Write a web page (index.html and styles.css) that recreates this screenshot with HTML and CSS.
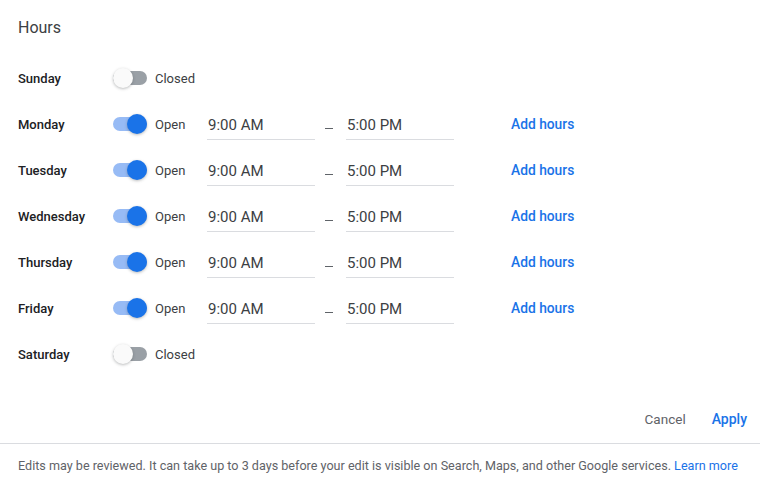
FILE: index.html
```html
<!DOCTYPE html>
<html>
<head>
<meta charset="utf-8">
<link rel="stylesheet" href="styles.css">
</head>
<body>
<div class="dialog">
  <div class="title">Hours</div>
  <div class="rows">
    <div class="row">
      <div class="day">Sunday</div>
      <div class="toggle off"><span class="track"></span><span class="thumb"></span></div>
      <div class="status">Closed</div>
    </div>
    <div class="row">
      <div class="day">Monday</div>
      <div class="toggle on"><span class="track"></span><span class="thumb"></span></div>
      <div class="status">Open</div>
      <div class="field">9:00 AM</div>
      <div class="dash"></div>
      <div class="field">5:00 PM</div>
      <div class="add">Add hours</div>
    </div>
    <div class="row">
      <div class="day">Tuesday</div>
      <div class="toggle on"><span class="track"></span><span class="thumb"></span></div>
      <div class="status">Open</div>
      <div class="field">9:00 AM</div>
      <div class="dash"></div>
      <div class="field">5:00 PM</div>
      <div class="add">Add hours</div>
    </div>
    <div class="row">
      <div class="day">Wednesday</div>
      <div class="toggle on"><span class="track"></span><span class="thumb"></span></div>
      <div class="status">Open</div>
      <div class="field">9:00 AM</div>
      <div class="dash"></div>
      <div class="field">5:00 PM</div>
      <div class="add">Add hours</div>
    </div>
    <div class="row">
      <div class="day">Thursday</div>
      <div class="toggle on"><span class="track"></span><span class="thumb"></span></div>
      <div class="status">Open</div>
      <div class="field">9:00 AM</div>
      <div class="dash"></div>
      <div class="field">5:00 PM</div>
      <div class="add">Add hours</div>
    </div>
    <div class="row">
      <div class="day">Friday</div>
      <div class="toggle on"><span class="track"></span><span class="thumb"></span></div>
      <div class="status">Open</div>
      <div class="field">9:00 AM</div>
      <div class="dash"></div>
      <div class="field">5:00 PM</div>
      <div class="add">Add hours</div>
    </div>
    <div class="row">
      <div class="day">Saturday</div>
      <div class="toggle off"><span class="track"></span><span class="thumb"></span></div>
      <div class="status">Closed</div>
    </div>
  </div>
  <div class="actions">
    <div class="btn cancel">Cancel</div>
    <div class="btn apply">Apply</div>
  </div>
  <div class="divider"></div>
  <div class="footer">Edits may be reviewed. It can take up to 3 days before your edit is visible on Search, Maps, and other Google services. <span class="link">Learn more</span></div>
</div>
</body>
</html>
```
FILE: styles.css
```css
html, body {
  margin: 0;
  padding: 0;
  background: #fff;
}
body {
  font-family: Roboto, "Liberation Sans", Arial, sans-serif;
  color: #3c4043;
  width: 760px;
  height: 483px;
  overflow: hidden;
}
.dialog {
  display: flex;
  flex-direction: column;
}
.title {
  margin: 18px 0 17px 18px;
  height: 20px;
  line-height: 20px;
  font-size: 16px;
  color: #3c4043;
}
.rows {
  display: flex;
  flex-direction: column;
  padding-left: 18px;
}
.row {
  display: flex;
  align-items: center;
  height: 46px;
}
.day {
  width: 95px;
  font-size: 13px;
  font-weight: 500;
  color: #202124;
}
.toggle {
  position: relative;
  width: 34px;
  height: 20px;
  margin-right: 8px;
}
.toggle .track {
  position: absolute;
  left: 0;
  top: 3px;
  width: 34px;
  height: 14px;
  border-radius: 7px;
}
.toggle .thumb {
  position: absolute;
  top: 0;
  width: 20px;
  height: 20px;
  border-radius: 50%;
  box-shadow: 0 1px 3px rgba(60,64,67,0.35);
}
.toggle.off .track {
  background: #9aa0a6;
}
.toggle.off .thumb {
  left: 0;
  background: #fafafa;
}
.toggle.on .track {
  background: #97bbf5;
}
.toggle.on .thumb {
  left: 14px;
  background: #1a73e8;
}
.status {
  width: 52px;
  font-size: 13px;
  color: #3c4043;
}
.field {
  width: 107px;
  height: 29px;
  padding: 2px 0 0 1px;
  box-sizing: content-box;
  display: flex;
  align-items: center;
  font-size: 15px;
  color: #3c4043;
  border-bottom: 1px solid #dadce0;
}
.dash {
  width: 8px;
  height: 1px;
  background: #5f6368;
  margin: 8px 13px 0 10px;
}
.add {
  margin-left: 57px;
  font-size: 13.8px;
  font-weight: 500;
  color: #1a73e8;
}
.actions {
  display: flex;
  justify-content: flex-end;
  align-items: center;
  height: 36px;
  margin-top: 24px;
  padding-right: 5px;
}
.btn {
  font-size: 14px;
  padding: 0 8px;
  line-height: 36px;
}
.cancel {
  color: #5f6368;
  font-weight: 400;
  font-size: 13.5px;
  margin-right: 10px;
}
.apply {
  color: #1a73e8;
  font-weight: 500;
}
.divider {
  height: 1px;
  background: #dadce0;
  margin-top: 6px;
}
.footer {
  padding: 14px 18px 0 18px;
  font-size: 12.6px;
  line-height: 16px;
  color: #5f6368;
  white-space: nowrap;
}
.link {
  color: #1a73e8;
}
```
